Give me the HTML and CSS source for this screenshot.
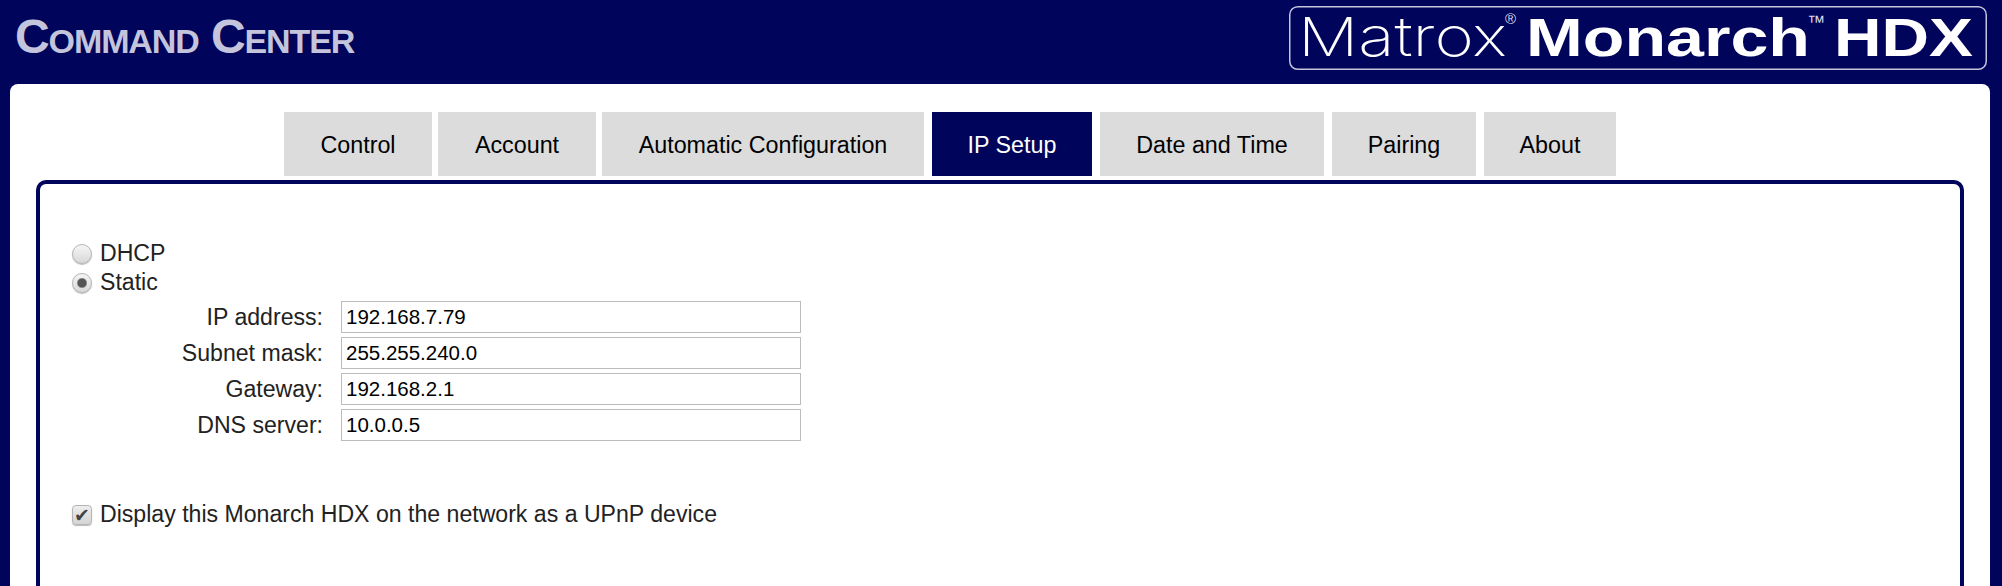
FILE: index.html
```html
<!DOCTYPE html>
<html lang="en">
<head>
  <meta charset="UTF-8" />
  <title>Command Center</title>
  <link rel="stylesheet" href="styles.css">
</head>
<body>

<header class="top-bar">
  <h1 class="app-title">Command Center</h1>
  <svg class="logo" width="698" height="64" viewBox="0 0 698 64">
    <rect x="0.75" y="0.75" width="696.5" height="62.5" rx="8" fill="none" stroke="#c4c4dc" stroke-width="1.5"/>
    <text class="logo-light" x="9" y="50" textLength="209" lengthAdjust="spacingAndGlyphs">Matrox</text>
    <text class="logo-reg" x="216" y="18">®</text>
    <text class="logo-bold" x="237" y="50" textLength="284" lengthAdjust="spacingAndGlyphs">Monarch</text>
    <text class="logo-tm" x="518" y="22">™</text>
    <text class="logo-bold" x="545" y="50" textLength="139" lengthAdjust="spacingAndGlyphs">HDX</text>
  </svg>
</header>

<main class="page">
  <nav class="tabs">
    <a class="tab">Control</a>
    <a class="tab">Account</a>
    <a class="tab">Automatic Configuration</a>
    <a class="tab active">IP Setup</a>
    <a class="tab">Date and Time</a>
    <a class="tab">Pairing</a>
    <a class="tab">About</a>
  </nav>

  <section class="tab-panel">
    <form class="ip-form">
      <label class="choice"><input type="radio" name="mode" class="radio"> DHCP</label>
      <label class="choice"><input type="radio" name="mode" class="radio" checked> Static</label>

      <div class="fields">
        <label class="field-label" for="ip">IP address:</label>
        <input class="field" id="ip" type="text" value="192.168.7.79">
        <label class="field-label" for="mask">Subnet mask:</label>
        <input class="field" id="mask" type="text" value="255.255.240.0">
        <label class="field-label" for="gw">Gateway:</label>
        <input class="field" id="gw" type="text" value="192.168.2.1">
        <label class="field-label" for="dns">DNS server:</label>
        <input class="field" id="dns" type="text" value="10.0.0.5">
      </div>

      <label class="choice upnp"><input type="checkbox" class="check" checked> Display this Monarch HDX on the network as a UPnP device</label>
    </form>
  </section>
</main>

</body>
</html>
```

FILE: styles.css
```css
html, body {
  margin: 0;
  padding: 0;
  height: 586px;
  overflow: hidden;
  background: #00045a;
  font-family: "Liberation Sans", Arial, sans-serif;
}

.top-bar {
  height: 84px;
  box-sizing: border-box;
  display: flex;
  justify-content: space-between;
  align-items: flex-start;
  padding: 6px 15px 0 15px;
}
.app-title {
  margin: 3px 0 0;
  font-size: 48px;
  line-height: 56px;
  font-weight: bold;
  font-variant: small-caps;
  letter-spacing: -1.1px;
  color: #c4c4dc;
}

.logo {
  display: block;
  overflow: visible;
}
.logo text {
  fill: #fff;
  font-size: 54px;
}
.logo .logo-light {
  font-family: Inter, "Liberation Sans", sans-serif;
  font-weight: 200;
}
.logo .logo-bold {
  font-family: "Liberation Sans", Arial, sans-serif;
  font-weight: bold;
}
.logo .logo-reg {
  font-family: "Liberation Sans", Arial, sans-serif;
  font-size: 15px;
  fill: #dcdcec;
}
.logo .logo-tm {
  font-family: "Liberation Sans", Arial, sans-serif;
  font-size: 18px;
  fill: #dcdcec;
}

.page {
  margin: 0 12px 0 10px;
  height: 502px;
  box-sizing: border-box;
  background: #fff;
  border-radius: 8px 8px 0 0;
  padding: 28px 26px 0;
}

.tabs {
  display: flex;
  gap: 8px;
  height: 64px;
  margin-bottom: 4px;
  padding-left: 248px;
}
.tab {
  display: flex;
  align-items: center;
  justify-content: center;
  padding-top: 3px;
  background: #dcdcdc;
  color: #000;
  font-size: 23.3px;
}
.tab:nth-child(1) { width: 148px; margin-right: -2px; }
.tab:nth-child(2) { width: 158px; margin-right: -2px; }
.tab:nth-child(3) { width: 322px; }
.tab:nth-child(4) { width: 160px; }
.tab:nth-child(5) { width: 224px; }
.tab:nth-child(6) { width: 144px; }
.tab:nth-child(7) { width: 132px; }
.tab.active {
  background: #00045a;
  color: #fff;
}

.tab-panel {
  height: 406px;
  box-sizing: border-box;
  border: 4px solid #00045a;
  border-bottom: 0;
  border-radius: 10px 10px 0 0;
  padding: 55px 32px 0;
}

.ip-form {
  color: #222;
  font-size: 23.1px;
}
.choice {
  display: flex;
  align-items: center;
  gap: 8px;
  height: 29px;
}
.radio, .check {
  appearance: none;
  margin: 0;
  width: 20px;
  height: 20px;
  flex: none;
  background: linear-gradient(#f6f6f6, #d8d8d8);
  border: 1px solid #b4b4b4;
  box-shadow: 0 1px 1px #bbb;
}
.radio { border-radius: 50%; }
.radio:checked {
  background: radial-gradient(circle, #555 0 4px, transparent 5.5px), linear-gradient(#f6f6f6, #d8d8d8);
}
.check {
  border-radius: 4px;
  background: linear-gradient(#eee, #d4d4d4);
  position: relative;
}
.check:checked::after {
  content: "✔";
  position: absolute;
  left: 1px;
  top: -1px;
  font-size: 19px;
  font-weight: bold;
  line-height: 20px;
  color: #444;
  font-family: "DejaVu Sans", sans-serif;
}

.fields {
  display: grid;
  grid-template-columns: 251px 460px;
  column-gap: 18px;
  row-gap: 4px;
  align-items: center;
  margin-top: 4px;
}
.field-label {
  text-align: right;
}
.field {
  height: 32px;
  box-sizing: border-box;
  border: 1px solid #bcbcbc;
  padding: 0 4px;
  margin: 0;
  font-family: inherit;
  font-size: 20.5px;
  color: #000;
  background: #fff;
}

.upnp {
  margin-top: 59px;
}
```
